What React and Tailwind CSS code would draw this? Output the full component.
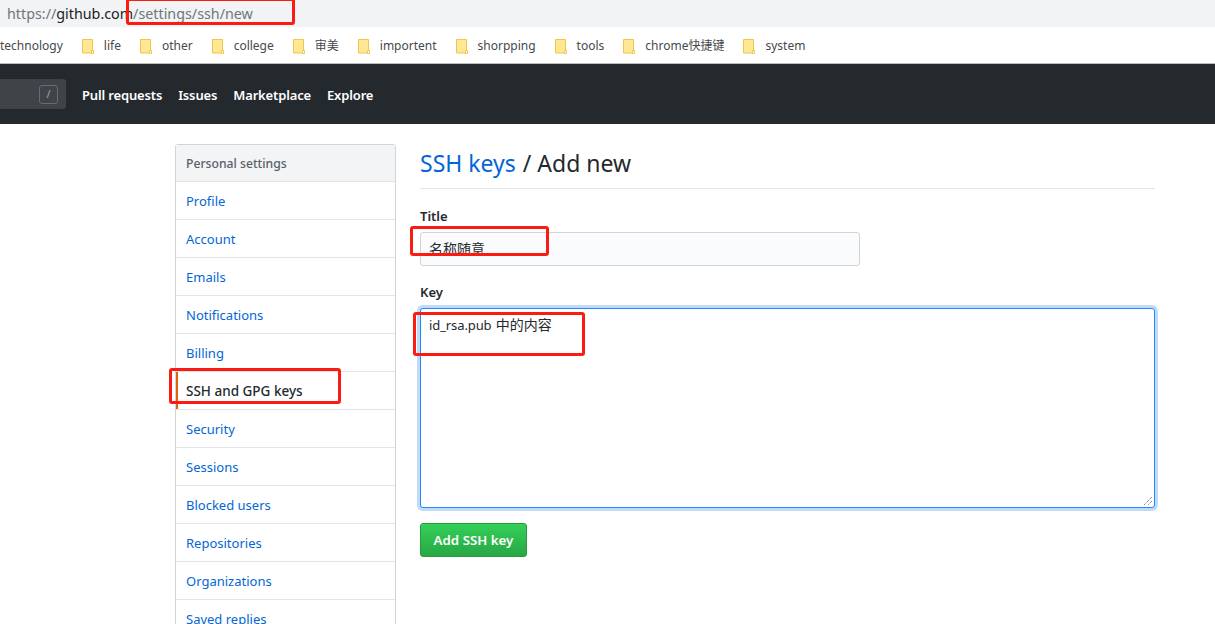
const bookmarks = ["life", "other", "college", "审美", "importent", "shorpping", "tools", "chrome快捷键", "system"];
const menu = ["Profile", "Account", "Emails", "Notifications", "Billing", "SSH and GPG keys", "Security", "Sessions", "Blocked users", "Repositories", "Organizations", "Saved replies"];
const font = { fontFamily: '"Noto Sans", "Noto Sans CJK SC", sans-serif' };

function Folder() {
  return (
    <svg width="12" height="15" viewBox="0 0 12 15" className="shrink-0">
      <path d="M.5.5h10v13.500H.5z" fill="#ffe793" stroke="#eec64c" />
      <path d="M9.500 11.500h2v3h-2z" fill="#fff" stroke="#eec64c" />
    </svg>
  );
}

function RedBox({ className }) {
  return <div className={"absolute border-[3px] border-[#fb1b12] rounded-[3px] " + className} />;
}

export default function App() {
  return (
    <div style={font} className="relative h-[624px] w-[1215px] overflow-hidden bg-white text-[14px] text-[#24292e]">
      <div className="flex h-[27px] items-center bg-[#f1f3f4] pl-[7px] text-[14.3px] text-[#70757a]">
        <span>https://</span>
        <span className="text-[#202124]">github.com</span>
        <span>/settings/ssh/new</span>
      </div>

      <div className="flex h-[37px] items-center border-b border-[#bdbdbd] pt-[2px] text-[12px] text-[#45494d]">
        <span className="mr-[19px]">technology</span>
        {bookmarks.map((b) => (
          <div key={b} className="mr-[19px] flex items-center gap-[10px]">
            <Folder />
            <span>{b}</span>
          </div>
        ))}
      </div>

      <div className="flex h-[60px] items-center bg-[#24292e] text-[13px] font-semibold tracking-[-0.15px] text-white">
        <div className="mr-4 flex h-[30px] w-[66px] items-center justify-end rounded-r-[3px] bg-[#3f4448] pr-2">
          <div className="flex h-[19px] w-[19px] items-center justify-center rounded-[3px] border border-[#696d70] text-[11px] font-normal text-[#a3a5a8]">/</div>
        </div>
        <nav className="flex gap-4 pt-[3px]">
          <span>Pull requests</span>
          <span>Issues</span>
          <span>Marketplace</span>
          <span>Explore</span>
        </nav>
      </div>

      <div className="flex items-start pl-[175px] pt-5">
        <aside className="mr-6 w-[221px] shrink-0 rounded-[3px] border border-[#d1d5da]">
          <div className="flex h-[36px] items-center bg-[#f3f4f6] px-[10px] pt-[2px] text-[12.2px] font-medium text-[#586069]">Personal settings</div>
          {menu.map((m) => {
            const active = m === "SSH and GPG keys";
            return (
              <div
                key={m}
                className={
                  "flex h-[38px] items-center border-t border-[#e1e4e8] px-[10px] " +
                  (active ? "relative pt-[1px] text-[13.500px] font-medium text-[#24292e]" : "pt-[3px] text-[13px] text-[#0366d6]")
                }
              >
                {active && <span className="absolute bottom-0 left-0 top-0 w-[2px] bg-[#e36209]" />}
                {m}
              </div>
            );
          })}
        </aside>

        <main className="w-[735px] shrink-0">
          <h1 className="mb-4 flex h-[45px] items-center border-b border-[#e1e4e8] pb-[6px] text-[23px] font-normal">
            <span className="text-[#0366d6]">SSH keys</span>
            <span className="ml-[7px]">/ Add new</span>
          </h1>
          <label className="block h-[27px] pt-[2px] text-[13px] font-semibold">Title</label>
          <div className="flex h-[34px] w-[440px] items-start rounded-[3px] border border-[#d1d5da] bg-[#fafbfc] pl-2 text-[14px]">
            <div className="h-[20px] overflow-hidden pt-[5px] leading-[22px]">名称随意</div>
          </div>
          <label className="mt-[15px] block h-[27px] pt-[2px] text-[13px] font-semibold">Key</label>
          <div className="relative h-[200px] rounded-[3px] border border-[#2188ff] bg-white pl-2 pt-[5px] text-[13px] leading-[22px] tracking-[-0.1px] shadow-[0_0_0_3px_#c0daf8]">
            id_rsa.pub <span className="ml-px text-[14px] tracking-normal">中的内容</span>
            <svg width="11" height="11" viewBox="0 0 11 11" className="absolute bottom-px right-px">
              <path d="M10 2 2 10M10 6 6 10" stroke="#555" strokeWidth="1" strokeDasharray="1 1" fill="none" />
            </svg>
          </div>
          <button className="mt-[15px] flex h-[34px] w-[107px] items-center justify-center rounded-[3px] border border-[#259a41] bg-gradient-to-b from-[#34d058] to-[#28a745] pt-[2px] text-[13.300px] font-semibold text-white">
            Add SSH key
          </button>
        </main>
      </div>

      <RedBox className="left-[126px] top-[-2px] h-[27px] w-[169px]" />
      <RedBox className="left-[169px] top-[368px] h-[36px] w-[172px]" />
      <RedBox className="left-[410px] top-[226px] h-[30px] w-[139px]" />
      <RedBox className="left-[413px] top-[312px] h-[44px] w-[172px]" />
    </div>
  );
}
